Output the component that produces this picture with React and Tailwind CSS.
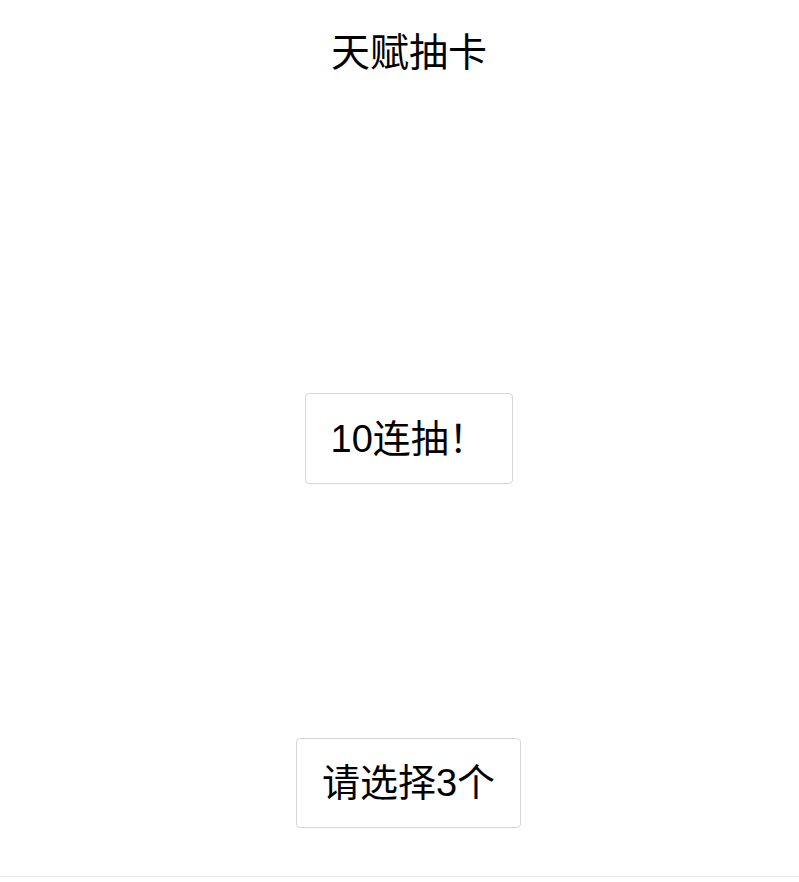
export default function App() {
  const font = { fontFamily: '"Liberation Sans", "Noto Sans CJK SC", sans-serif' };
  return (
    <div className="w-full bg-white text-black" style={font}>
      <div className="flex h-[877px] flex-col items-center border-b border-[#e6e6e6] pl-[18px]">
        <h1 className="mt-[23px] ml-[1px] text-[39px] leading-[60px] font-normal">天赋抽卡</h1>
        <button className="mt-[310px] h-[91px] w-[208px] rounded-[4px] border border-[#d6d6d6] bg-white pl-[25px] text-left text-[38px] leading-none">
          10连抽！
        </button>
        <button className="mt-[254px] h-[90px] w-[225px] rounded-[4px] border border-[#d6d6d6] bg-white text-center text-[38px] leading-none">
          请选择3个
        </button>
      </div>
    </div>
  );
}
